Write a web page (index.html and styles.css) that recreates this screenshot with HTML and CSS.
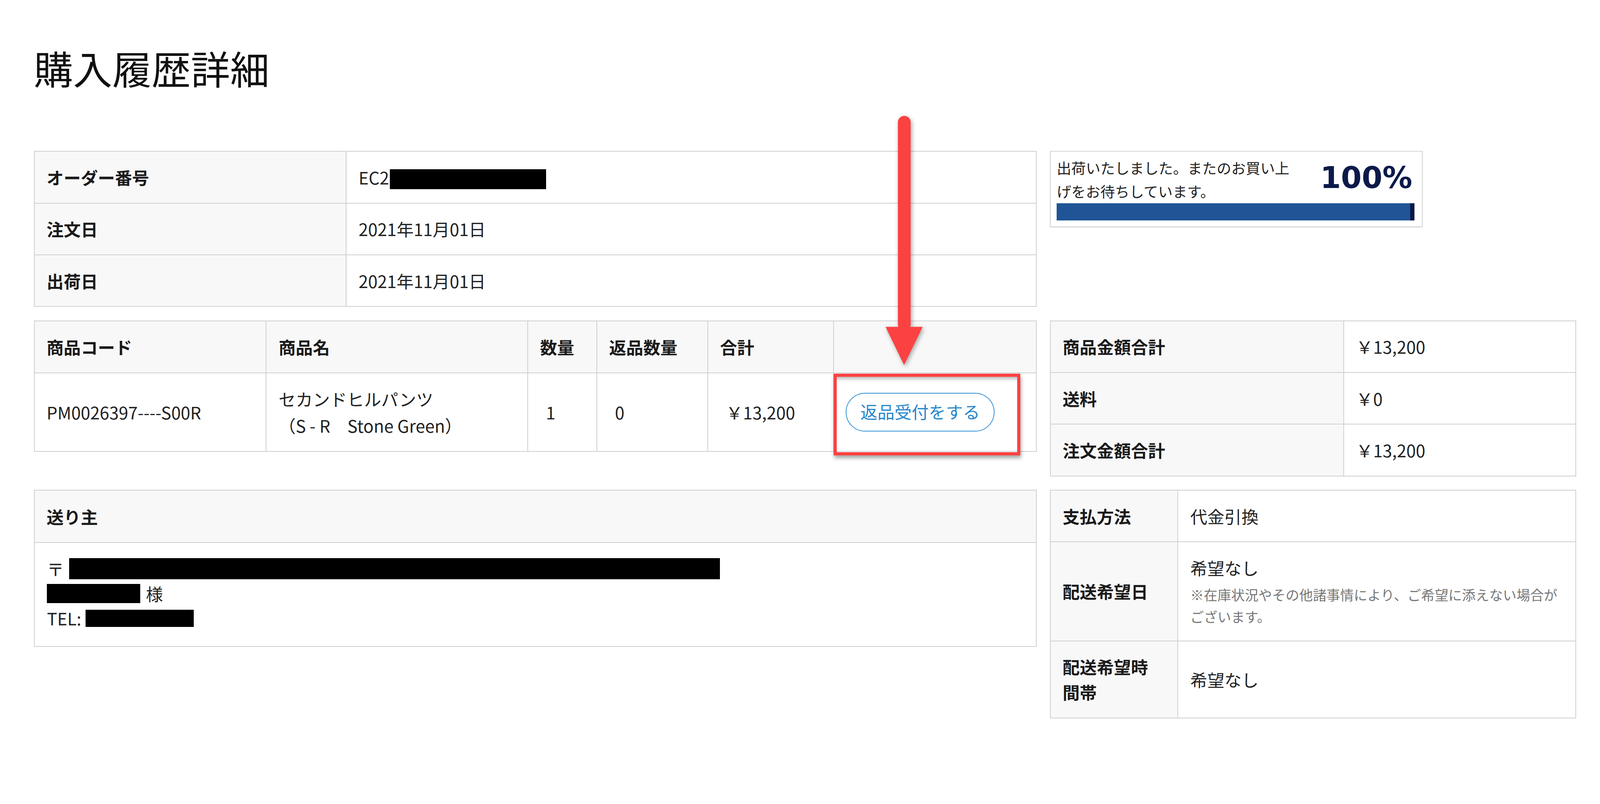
FILE: index.html
```html
<!DOCTYPE html>
<html lang="ja">
<head>
<meta charset="utf-8">
<title>購入履歴詳細</title>
<link rel="stylesheet" href="styles.css">
</head>
<body>
<div class="page">
  <h1 class="title">購入履歴詳細</h1>
  <div class="grid">
    <table class="tbl order">
      <colgroup><col class="c-order-label"><col></colgroup>
      <tr><th>オーダー番号</th><td>EC2<span class="redact r-order"></span></td></tr>
      <tr><th>注文日</th><td>2021年11月01日</td></tr>
      <tr><th>出荷日</th><td>2021年11月01日</td></tr>
    </table>

    <div class="progress">
      <div class="progress-head">
        <p class="progress-text">出荷いたしました。またのお買い上げをお待ちしています。</p>
        <span class="progress-pct">100%</span>
      </div>
      <div class="progress-bar"><div class="progress-fill" style="width:100%"></div></div>
    </div>

    <table class="tbl items">
      <colgroup>
        <col class="c-code"><col class="c-name"><col class="c-qty"><col class="c-ret"><col class="c-sum"><col>
      </colgroup>
      <tr class="head">
        <th>商品コード</th><th>商品名</th><th>数量</th><th>返品数量</th><th>合計</th><th></th>
      </tr>
      <tr>
        <td>PM0026397----S00R</td>
        <td class="pname">セカンドヒルパンツ<br>（S - R　Stone Green）</td>
        <td class="ind">1</td>
        <td class="ind">0</td>
        <td class="ind">￥13,200</td>
        <td><a class="btn-return" href="#">返品受付をする</a></td>
      </tr>
    </table>

    <table class="tbl summary">
      <colgroup><col class="c-sum-label"><col></colgroup>
      <tr><th>商品金額合計</th><td>￥13,200</td></tr>
      <tr><th>送料</th><td>￥0</td></tr>
      <tr><th>注文金額合計</th><td>￥13,200</td></tr>
    </table>

    <table class="tbl sender">
      <tr><th class="sender-head">送り主</th></tr>
      <tr>
        <td class="sender-body">
          <div class="line">〒 <span class="redact r-addr"></span></div>
          <div class="line"><span class="redact r-name"></span> 様</div>
          <div class="line">TEL: <span class="redact r-tel"></span></div>
        </td>
      </tr>
    </table>

    <table class="tbl payment">
      <colgroup><col class="c-pay-label"><col></colgroup>
      <tr><th>支払方法</th><td>代金引換</td></tr>
      <tr>
        <th>配送希望日</th>
        <td>希望なし<p class="note">※在庫状況やその他諸事情により、ご希望に添えない場合がございます。</p></td>
      </tr>
      <tr><th>配送希望時間帯</th><td>希望なし</td></tr>
    </table>
  </div>

  <div class="callout-box"></div>
  <svg class="callout-arrow" viewBox="0 0 140 710" aria-hidden="true">
    <rect x="49" y="8" width="35" height="590" rx="17.5" ry="17.5" fill="#fc4141"/>
    <polygon points="15,588 117,588 66,693" fill="#fc4141"/>
  </svg>
</div>
</body>
</html>
```

FILE: styles.css
```css
/* 1rem = 100 reference pixels of a 4400px-wide canvas */
html {
  font-size: calc(100vw / 44);
}

html, body {
  margin: 0;
  padding: 0;
  background: #ffffff;
}

body {
  font-family: "Noto Sans CJK JP", "Noto Sans", sans-serif;
  color: #222222;
  overflow-x: hidden;
}

.page {
  position: relative;
  width: 44rem;
  min-height: 20.57rem;
  box-sizing: border-box;
  padding: 1.31rem 0 0 0.93rem;
}

.title {
  margin: 0;
  font-size: 1.08rem;
  line-height: 1.08rem;
  font-weight: 400;
  color: #111111;
}

.grid {
  margin-top: 1.76rem;
  display: grid;
  grid-template-columns: 27.58rem 14.48rem;
  column-gap: 0.36rem;
  row-gap: 0.37rem;
  align-items: start;
}

/* tables */
.tbl {
  width: 100%;
  border-collapse: collapse;
  table-layout: fixed;
  font-size: 0.47rem;
  line-height: 0.7rem;
}

.tbl th,
.tbl td {
  border: 0.03rem solid #cfcfcf;
  padding: 0.35rem 0.33rem;
  text-align: left;
  vertical-align: middle;
}

.tbl th {
  background: #f8f8f8;
  font-weight: 700;
  color: #1a1a1a;
}

.tbl td {
  background: #ffffff;
  font-weight: 400;
}

.c-order-label { width: 8.58rem; }

.c-code { width: 6.38rem; }
.c-name { width: 7.19rem; }
.c-qty { width: 1.9rem; }
.c-ret { width: 3.05rem; }
.c-sum { width: 3.46rem; }

.items tr.head th {
  padding-top: 0.36rem;
  padding-bottom: 0.35rem;
}

.items .pname {
  line-height: 0.72rem;
}

.items .ind {
  text-indent: 0.16rem;
}

.c-sum-label { width: 8.07rem; }
.c-pay-label { width: 3.51rem; }

.payment th {
  padding-right: 0.45rem;
}

.redact {
  display: inline-block;
  background: #000000;
  vertical-align: middle;
}

.r-order {
  width: 4.3rem;
  height: 0.55rem;
  margin-left: 0.02rem;
  position: relative;
  top: -0.02rem;
}

/* progress */
.progress {
  width: 10.25rem;
  box-sizing: border-box;
  border: 0.03rem solid #d6d6d6;
  box-shadow: 0 0.02rem 0.03rem rgba(0, 0, 0, 0.12);
  padding: 0.13rem 0.2rem 0.16rem 0.17rem;
  background: #ffffff;
}

.progress-head {
  display: flex;
  justify-content: space-between;
  align-items: center;
}

.progress-text {
  margin: 0;
  width: 6.6rem;
  font-size: 0.4rem;
  line-height: 0.64rem;
  color: #222222;
}

.progress-pct {
  font-family: "DejaVu Sans", "Liberation Sans", sans-serif;
  font-weight: 700;
  font-size: 0.82rem;
  line-height: 0.9rem;
  color: #0c1a4a;
  margin-right: 0.06rem;
  margin-top: -0.1rem;
}

.progress-bar {
  height: 0.48rem;
  background: #e6e6e6;
}

.progress-fill {
  height: 100%;
  box-sizing: border-box;
  background: #1f5596;
  border-right: 0.12rem solid #0b1846;
}

/* return button */
.btn-return {
  display: inline-block;
  box-sizing: border-box;
  width: 4.09rem;
  height: 1.06rem;
  border: 0.03rem solid #3392d6;
  border-radius: 0.53rem;
  color: #2787cb;
  text-decoration: none;
  text-align: center;
  font-size: 0.47rem;
  line-height: 0.98rem;
  vertical-align: middle;
  text-indent: 0;
}

/* sender */
.sender .sender-head {
  padding-top: 0.36rem;
  padding-bottom: 0.36rem;
}

.sender .sender-body {
  padding: 0.37rem 0.33rem 0.42rem 0.34rem;
  line-height: 0.68rem;
}

.sender .line {
  height: 0.68rem;
  display: flex;
  align-items: center;
}

.r-addr {
  width: 17.9rem;
  height: 0.58rem;
  margin-left: 0.14rem;
}

.r-name {
  width: 2.56rem;
  height: 0.52rem;
  margin-right: 0.16rem;
}

.r-tel {
  width: 2.97rem;
  height: 0.48rem;
  margin-left: 0.12rem;
}

/* payment */
.payment .note {
  margin: 0.08rem 0 0 0;
  font-size: 0.375rem;
  line-height: 0.61rem;
  color: #777777;
}

/* annotations over the table */
.callout-box {
  position: absolute;
  left: 22.92rem;
  top: 10.27rem;
  width: 5.14rem;
  height: 2.25rem;
  box-sizing: border-box;
  border: 0.09rem solid #fc4141;
  box-shadow: 0.02rem 0.08rem 0.1rem rgba(0, 0, 0, 0.35), inset 0 0.12rem 0.1rem -0.06rem rgba(0, 0, 0, 0.28);
}

.callout-arrow {
  position: absolute;
  left: 24.2rem;
  top: 3.1rem;
  width: 1.4rem;
  height: 7.1rem;
  overflow: visible;
  filter: drop-shadow(0.04rem 0.05rem 0.06rem rgba(0, 0, 0, 0.35));
}
```
